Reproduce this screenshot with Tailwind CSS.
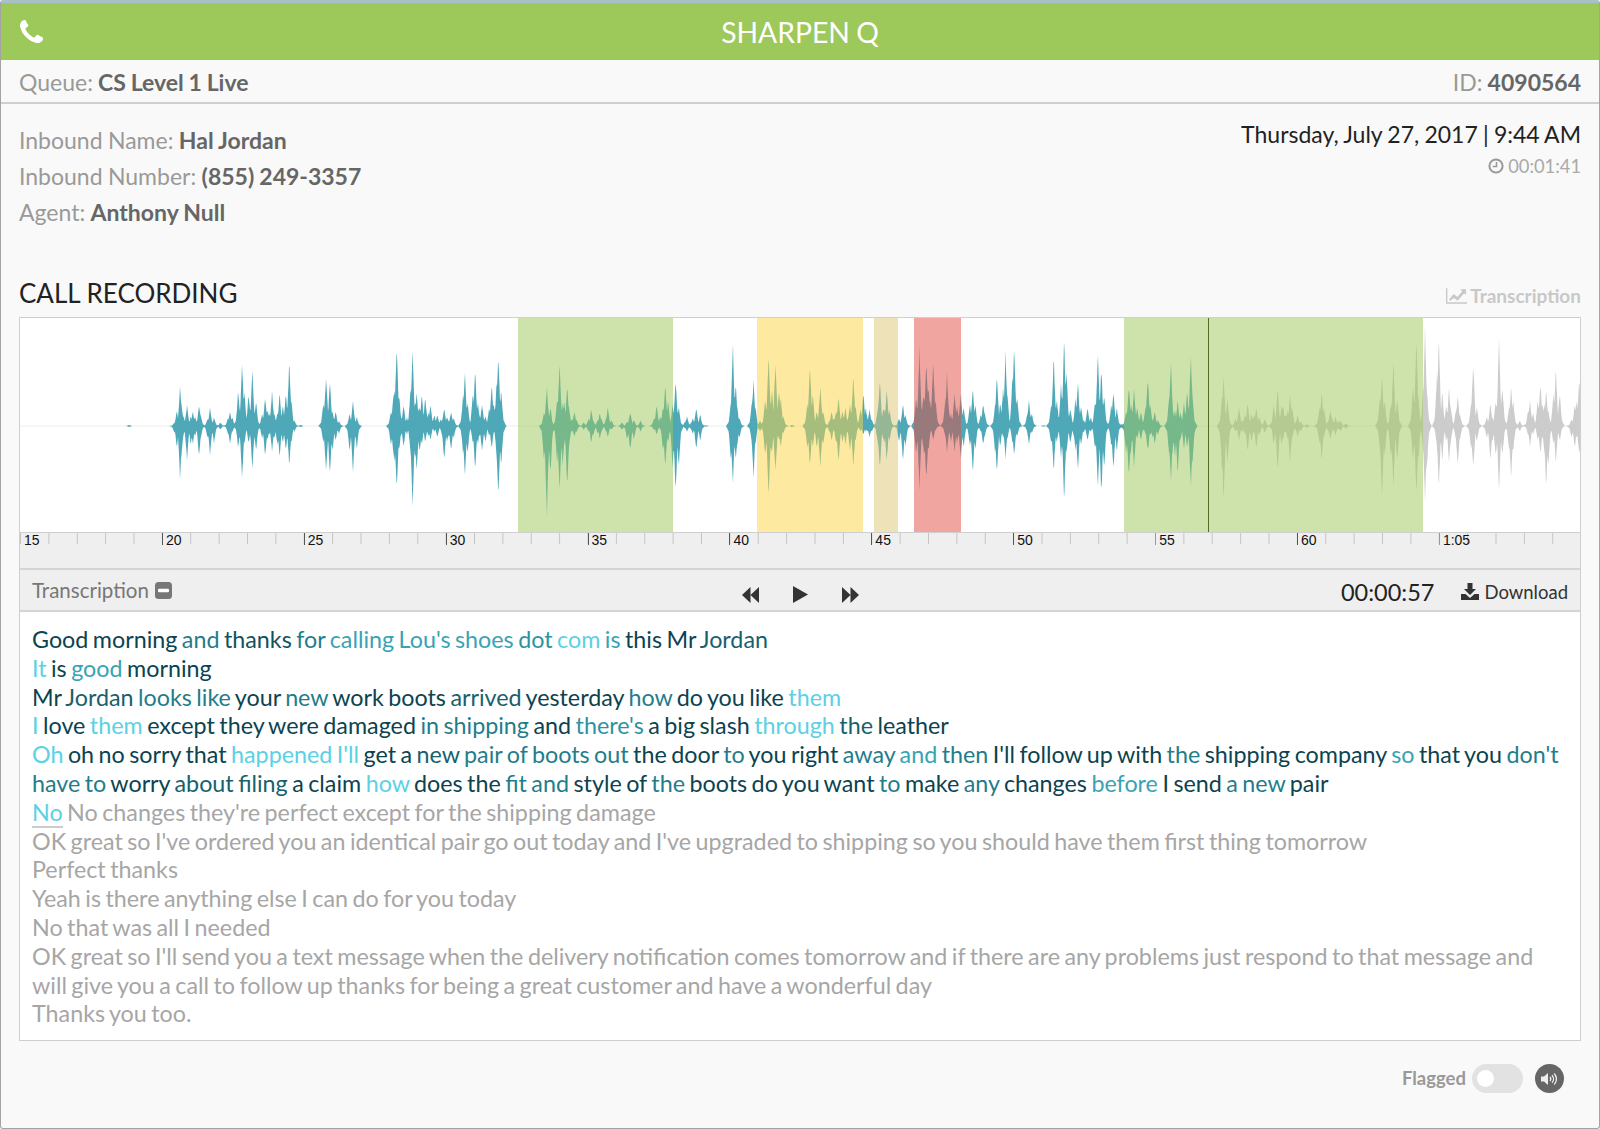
<!DOCTYPE html>
<html lang="en">
<head>
    <meta charset="UTF-8">
    <meta name="viewport" content="width=device-width, initial-scale=1.0">
    <title>Sharpen Q - Call Recording</title>
    <script src="https://cdn.jsdelivr.net/npm/@tailwindcss/browser@4"></script>
</head>
<body class="bg-white font-[Lato,sans-serif]">
<div class="w-[1600px] h-[1129px] flex flex-col bg-[#f9f9f9] border border-[#a3a3a3] border-t-[3px] border-t-[#a9c0c8] rounded-[3px] overflow-hidden">

    <!-- Header -->
    <div class="h-[57px] shrink-0 pt-[2px] bg-[#9dc85a] relative flex items-center justify-center text-white text-[28.300px] [word-spacing:-1px]">
        <svg class="absolute left-[19px] top-[17px] w-[23px] h-[23px]" viewBox="0 0 1408 1408" fill="#fff"><path d="M1408 1112q0 27-10 70.5t-21 68.5q-21 50-122 106-94 51-186 51-27 0-53-3.5t-57.5-12.5-47-14.5-55.5-20.5-49-18q-98-35-175-83-127-79-264-216t-216-264q-48-77-83-175-3-9-18-49t-20.5-55.5-14.5-47-12.5-57.5-3.5-53q0-92 51-186 56-101 106-122 25-11 68.5-21t70.5-10q14 0 21 3 18 6 53 76 11 19 30 54t35 63.5 31 53.5q3 4 17.5 25t21.5 35.5 7 28.5q0 20-28.5 50t-62 55-62 53-28.5 46q0 9 5 22.5t8.5 20.5 14 24 11.5 19q76 137 174 235t235 174q2 1 19 11.5t24 14 20.5 8.5 22.5 5q18 0 46-28.5t53-62 55-62 50-28.5q14 0 28.5 7t35.5 21.5 25 17.5q25 15 53.5 31t63.5 35 54 30q70 35 76 53 3 7 3 21z"/></svg>
        <span>SHARPEN Q</span>
    </div>

    <!-- Queue row -->
    <div class="h-[44px] shrink-0 pt-[2px] flex items-center justify-between px-[18px] border-b-2 border-[#cfcfcf] text-[23px] text-[#999] [word-spacing:-0.8px]">
        <div>Queue: <b class="font-bold text-[#666]">CS Level 1 Live</b></div>
        <div>ID: <b class="font-bold text-[#666]">4090564</b></div>
    </div>

    <!-- Call info -->
    <div class="h-[171px] shrink-0 flex justify-between px-[18px]">
        <div class="pt-[18px] text-[23px] leading-[36px] text-[#999] [word-spacing:-0.5px]">
            <div>Inbound Name: <b class="font-bold text-[#666]">Hal Jordan</b></div>
            <div>Inbound Number: <b class="font-bold text-[#666]">(855) 249-3357</b></div>
            <div>Agent: <b class="font-bold text-[#666]">Anthony Null</b></div>
        </div>
        <div class="pt-[14px] text-right">
            <div class="text-[23px] leading-[32px] text-[#222] [word-spacing:-0.7px]">Thursday, July 27, 2017 | 9:44 AM</div>
            <div class="mt-[4px] flex items-center justify-end gap-[4px] text-[18.300px] leading-[24px] text-[#aaa]">
                <svg class="w-[16px] h-[16px]" viewBox="0 0 16 16" fill="none" stroke="#999" stroke-width="2"><circle cx="8" cy="8" r="6.6"/><path d="M8.5 4v4.5H4.8" stroke-width="1.6"/></svg>
                <span>00:01:41</span>
            </div>
        </div>
    </div>

    <!-- Section heading -->
    <div class="h-[42px] shrink-0 flex items-start justify-between px-[18px]">
        <div class="text-[26px] leading-[36px] text-[#222]">CALL RECORDING</div>
        <div class="flex items-center gap-[3px] pt-[6px] text-[19px] leading-[30px] font-bold text-[#c8c8c8]">
            <svg class="w-[21px] h-[16px]" viewBox="0 0 22 16" fill="#c8c8c8"><path d="M0 0h1.4v14.6H22V16H0z"/><path d="M3 12l5-6 4 3 5-6-2-2h6v6l-2-2-6.8 8-4-3L4.400 13z"/></svg>
            <span>Transcription</span>
        </div>
    </div>

    <!-- Recording box -->
    <div class="mx-[18px] shrink-0 border border-[#cfcfcf] bg-white">
        <!-- Waveform -->
        <div class="relative h-[214px] overflow-hidden">
            <svg id="wave" class="absolute inset-0" width="1560" height="214" viewBox="0 0 1560 214"></svg>
            <div class="absolute top-0 bottom-0 left-[498px] w-[155px] bg-[#9dc85a]/50"></div>
            <div class="absolute top-0 bottom-0 left-[737px] w-[106px] bg-[#fbd341]/50"></div>
            <div class="absolute top-0 bottom-0 left-[854px] w-[24px] bg-[#ddc571]/50"></div>
            <div class="absolute top-0 bottom-0 left-[894px] w-[47px] bg-[#e14b41]/50"></div>
            <div class="absolute top-0 bottom-0 left-[1104px] w-[299px] bg-[#9dc85a]/50"></div>
            <div class="absolute top-0 bottom-0 left-[1188px] w-px bg-[#4f6b22]"></div>
        </div>
        <!-- Ruler -->
        <div class="h-[36px] flex overflow-hidden border-t border-[#cfcfcf] bg-[#efefef] bg-[linear-gradient(to_right,#c4c4c4_1px,transparent_1px)] bg-size-[28.38px_11px] bg-repeat-x text-[14px] leading-[15px] text-[#111] font-['Liberation_Sans',sans-serif]">
            <div class="w-[141.9px] h-[12px] shrink-0 pl-[4px]">15</div>
            <div class="w-[141.9px] h-[12px] shrink-0 pl-[3px] border-l border-[#555]">20</div>
            <div class="w-[141.9px] h-[12px] shrink-0 pl-[3px] border-l border-[#555]">25</div>
            <div class="w-[141.9px] h-[12px] shrink-0 pl-[3px] border-l border-[#555]">30</div>
            <div class="w-[141.9px] h-[12px] shrink-0 pl-[3px] border-l border-[#555]">35</div>
            <div class="w-[141.9px] h-[12px] shrink-0 pl-[3px] border-l border-[#555]">40</div>
            <div class="w-[141.9px] h-[12px] shrink-0 pl-[3px] border-l border-[#555]">45</div>
            <div class="w-[141.9px] h-[12px] shrink-0 pl-[3px] border-l border-[#555]">50</div>
            <div class="w-[141.9px] h-[12px] shrink-0 pl-[3px] border-l border-[#999]">55</div>
            <div class="w-[141.9px] h-[12px] shrink-0 pl-[3px] border-l border-[#555]">60</div>
            <div class="w-[141.9px] h-[12px] shrink-0 pl-[3px] border-l border-[#999]">1:05</div>
        </div>
        <!-- Controls -->
        <div class="relative h-[44px] flex items-center justify-between px-[12px] bg-[#efefef] border-y-2 border-[#d4d4d4]">
            <div class="flex items-center gap-[6px] text-[20.500px] text-[#777]">
                <span>Transcription</span>
                <svg class="w-[17px] h-[17px]" viewBox="0 0 17 17"><rect width="17" height="17" rx="3.500" fill="#777"/><rect x="3" y="6.800" width="11" height="3.400" rx="1" fill="#fff"/></svg>
            </div>
            <div class="absolute left-[722px] top-[16px] flex items-center gap-[34px]">
                <svg class="w-[17px] h-[16px]" viewBox="0 0 17 16" fill="#333"><path d="M8.500 0v16L0 8zM17 0v16L8.500 8z"/></svg>
                <svg class="w-[15px] h-[17px]" viewBox="0 0 15 17" fill="#333"><path d="M0 0l15 8.500L0 17z"/></svg>
                <svg class="w-[17px] h-[16px]" viewBox="0 0 17 16" fill="#333"><path d="M0 0l8.500 8L0 16zM8.500 0L17 8l-8.500 8z"/></svg>
            </div>
            <div class="flex items-center pt-[6px]">
                <span class="text-[23.500px] text-[#222] mr-[27px]">00:00:57</span>
                <svg class="w-[18px] h-[17px] mr-[5px] -mt-[3px]" viewBox="0 0 18 17" fill="#333"><path d="M6.500 0h5v6h3.500L9 12 3 6h3.500z"/><path d="M0 11h4.500L9 15l4.500-4H18v6H0z"/></svg>
                <span class="text-[18.500px] text-[#333]">Download</span>
            </div>
        </div>
        <!-- Transcript -->
        <div class="h-[428px] px-[12px] pt-[13px] text-[23.300px] leading-[28.800px] [word-spacing:-1.500px] text-[#a6a6a6]">
            <div><span class="text-[#0b4350]">Good morning</span> <span class="text-[#1f7d8b]">and</span> <span class="text-[#0f5360]">thanks</span> <span class="text-[#1f7d8b]">for</span> <span class="text-[#38a3b4]">calling Lou's shoes</span> <span class="text-[#2c93a3]">dot</span> <span class="text-[#5bd1e3]">com</span> <span class="text-[#38a3b4]">is</span> <span class="text-[#0b4350]">this Mr</span> <span class="text-[#17616e]">Jordan</span></div>
            <div><span class="text-[#5bd1e3]">It</span> <span class="text-[#0b4350]">is</span> <span class="text-[#38a3b4]">good</span> <span class="text-[#0b4350]">morning</span></div>
            <div><span class="text-[#0b4350]">Mr</span> <span class="text-[#17616e]">Jordan</span> <span class="text-[#1f7d8b]">looks like</span> <span class="text-[#0b4350]">your</span> <span class="text-[#1f7d8b]">new</span> <span class="text-[#0b4350]">work boots</span> <span class="text-[#17616e]">arrived</span> <span class="text-[#0b4350]">yesterday</span> <span class="text-[#1f7d8b]">how</span> <span class="text-[#0b4350]">do you like</span> <span class="text-[#5bd1e3]">them</span></div>
            <div><span class="text-[#5bd1e3]">I</span> <span class="text-[#0b4350]">love</span> <span class="text-[#5bd1e3]">them</span> <span class="text-[#0b4350]">except they were damaged</span> <span class="text-[#1f7d8b]">in shipping</span> <span class="text-[#0b4350]">and</span> <span class="text-[#2c93a3]">there's</span> <span class="text-[#0b4350]">a big slash</span> <span class="text-[#5bd1e3]">through</span> <span class="text-[#17616e]">the</span> <span class="text-[#0b4350]">leather</span></div>
            <div><span class="text-[#5bd1e3]">Oh</span> <span class="text-[#0b4350]">oh no sorry that</span> <span class="text-[#5bd1e3]">happened I'll</span> <span class="text-[#0b4350]">get a</span> <span class="text-[#17616e]">new</span> <span class="text-[#1f7d8b]">pair of boots out</span> <span class="text-[#0b4350]">the door</span> <span class="text-[#1f7d8b]">to</span> <span class="text-[#0b4350]">you right</span> <span class="text-[#1f7d8b]">away</span> <span class="text-[#38a3b4]">and</span> <span class="text-[#1f7d8b]">then</span> <span class="text-[#0b4350]">I'll follow up with</span> <span class="text-[#1f7d8b]">the</span> <span class="text-[#0b4350]">shipping company</span> <span class="text-[#38a3b4]">so</span> <span class="text-[#0b4350]">that you</span> <span class="text-[#1f7d8b]">don't</span> <span class="text-[#1f7d8b]">have to</span> <span class="text-[#0b4350]">worry</span> <span class="text-[#17616e]">about filing</span> <span class="text-[#0b4350]">a claim</span> <span class="text-[#5bd1e3]">how</span> <span class="text-[#0b4350]">does the</span> <span class="text-[#1f7d8b]">fit and</span> <span class="text-[#0b4350]">style of</span> <span class="text-[#1f7d8b]">the</span> <span class="text-[#0b4350]">boots do you want</span> <span class="text-[#1f7d8b]">to</span> <span class="text-[#0b4350]">make</span> <span class="text-[#1f7d8b]">any</span> <span class="text-[#0b4350]">changes</span> <span class="text-[#38a3b4]">before</span> <span class="text-[#0b4350]">I send</span> <span class="text-[#1f7d8b]">a new</span> <span class="text-[#0b4350]">pair</span></div>
            <div><span class="text-[#5bd1e3] border-b-2 border-[#ccc]">No</span> No changes they're perfect except for the shipping damage</div>
            <div>OK great so I've ordered you an identical pair go out today and I've upgraded to shipping so you should have them first thing tomorrow</div>
            <div>Perfect thanks</div>
            <div>Yeah is there anything else I can do for you today</div>
            <div>No that was all I needed</div>
            <div>OK great so I'll send you a text message when the delivery notification comes tomorrow and if there are any problems just respond to that message and will give you a call to follow up thanks for being a great customer and have a wonderful day</div>
            <div>Thanks you too.</div>
        </div>
    </div>

    <!-- Footer -->
    <div class="flex-1 flex items-start justify-end pt-[23px] pr-[35px]">
        <span class="text-[18.500px] leading-[29px] font-bold text-[#999] mr-[6px]">Flagged</span>
        <div class="w-[51px] h-[29px] rounded-full bg-[#e2e2e2] flex items-center pl-[5px] mr-[12px]">
            <div class="w-[17px] h-[17px] rounded-full bg-white"></div>
        </div>
        <div class="w-[29px] h-[29px] rounded-full bg-[#666] flex items-center justify-center">
            <svg class="w-[18px] h-[14px]" viewBox="0 0 18 14" fill="none"><path d="M0 4.500h3L7 1v12L3 9.500H0z" fill="#eee"/><path d="M9 5c1 1.200 1 2.800 0 4M11 3.200c2 2.200 2 5.400 0 7.600M13.200 1.500c3 3.200 3 7.800 0 11" stroke="#eee" stroke-width="1.300"/></svg>
        </div>
    </div>
</div>

<script>
    // [x in crop px, up, down] per spike, crops start at x=0, 520 and 1060 on the page
    var crops = [
        [0, [[375,3,3],[515,30,30],[523,105,140],[543,55,90],[560,40,50],[578,55,80],[610,50,80],[640,10,10],[668,40,50],[703,178,150],[733,150,115],[770,80,85],[790,95,70],[812,90,85],[840,178,110],[855,15,15],[873,3,3],[947,140,130],[958,120,130],[975,40,40],[1025,65,120],[1145,100,100],[1152,220,175],[1172,60,60],[1198,215,230],[1210,90,120],[1225,85,50],[1235,80,45],[1250,60,40],[1270,30,30],[1290,50,95],[1310,40,70],[1350,140,130],[1380,155,120],[1400,60,70],[1428,110,60],[1447,200,200],[1462,5,5]]],
        [520, [[78,110,255],[115,180,185],[137,110,165],[158,40,30],[185,10,10],[207,45,45],[232,35,35],[255,50,30],[296,10,10],[320,38,68],[350,15,15],[397,60,25],[422,112,110],[452,125,180],[485,25,15],[512,50,65],[540,2,2],[618,225,158],[630,60,60],[678,120,135],[697,15,15],[722,200,200],[742,180,130],[757,80,60],[790,3,3],[842,165,110],[872,110,115],[905,40,40],[925,80,100],[945,50,50],[968,140,115],[997,95,25],[1015,45,30],[1045,125,115],[1065,100,95],[1112,60,95],[1160,210,170],[1180,180,150],[1200,180,40],[1240,140,70],[1262,90,70],[1280,90,90],[1315,100,125],[1345,60,50],[1385,140,130],[1410,195,85],[1435,230,85],[1478,70,50],[1520,2,2],[1550,185,120]]],
        [1060, [[12,240,205],[30,50,50],[52,115,115],[80,50,40],[110,195,165],[120,160,190],[155,95,120],[178,5,5],[200,110,140],[215,100,110],[235,40,40],[255,135,70],[275,40,50],[322,180,155],[342,70,130],[360,60,60],[380,190,165],[475,140,210],[520,55,40],[545,65,70],[570,50,60],[595,20,20],[632,105,120],[648,60,40],[668,85,100],[690,30,30],[717,5,5],[745,5,5],[760,95,95],[785,45,40],[800,25,25],[815,15,15],[830,8,8],[935,135,190],[968,175,165],[1035,230,180],[1060,265,200],[1100,245,170],[1130,105,100],[1155,85,110],[1200,180,120],[1250,60,90],[1275,230,170],[1310,110,145],[1335,15,15],[1365,70,55],[1395,120,80],[1412,100,170],[1440,155,100],[1495,60,60],[1508,130,80]]]
    ];

    function rnd(x) {
        var n = Math.sin(x * 12.9898) * 43758.5453;
        return n - Math.floor(n);
    }

    var spikes = [];
    crops.forEach(function (c) {
        c[1].forEach(function (s) {
            var x = c[0] + s[0] / 2.904 - 20, up = s[1] / 3, down = s[2] / 3;
            spikes.push({ x: x, up: up * 1.2, down: down * 1.2 });
            // neighbours so a burst looks filled in rather than one clean triangle
            if (up > 8) {
                spikes.push({ x: x - 1.5 - 2.5 * rnd(x), up: up * (0.35 + 0.4 * rnd(x + 1)), down: down * (0.35 + 0.4 * rnd(x + 2)) });
                spikes.push({ x: x + 1.5 + 2.5 * rnd(x + 3), up: up * (0.35 + 0.4 * rnd(x + 4)), down: down * (0.35 + 0.4 * rnd(x + 5)) });
            }
        });
    });

    function amp(x, key) {
        var best = 0;
        spikes.forEach(function (s) {
            var a = s[key], d = Math.abs(x - s.x);
            var sharp = d < 3 ? a * Math.pow(1 - d / 3, 1.3) : 0;
            var body = d < 5 ? Math.min(a * 0.28, 14) * (1 - d / 5) : 0;
            best = Math.max(best, sharp, body);
        });
        return best * (0.85 + 0.15 * rnd(x));
    }

    function area(from, to, fill) {
        var top = '', bottom = '';
        for (var x = from; x <= to; x += 0.5) {
            var up = amp(x, 'up'), down = amp(x, 'down');
            top += (top ? 'L' : 'M') + x + ' ' + (108 - up).toFixed(1);
            bottom = 'L' + x + ' ' + (108 + down).toFixed(1) + bottom;
        }
        return '<path d="' + top + bottom + 'Z" fill="' + fill + '"/>';
    }

    document.getElementById('wave').innerHTML =
        '<rect x="0" y="107.5" width="1560" height="1" fill="#eeeeee"/>' +
        area(0, 1188, '#4fa8b8') + area(1188, 1560, '#cccccc');
</script>
</body>
</html>
